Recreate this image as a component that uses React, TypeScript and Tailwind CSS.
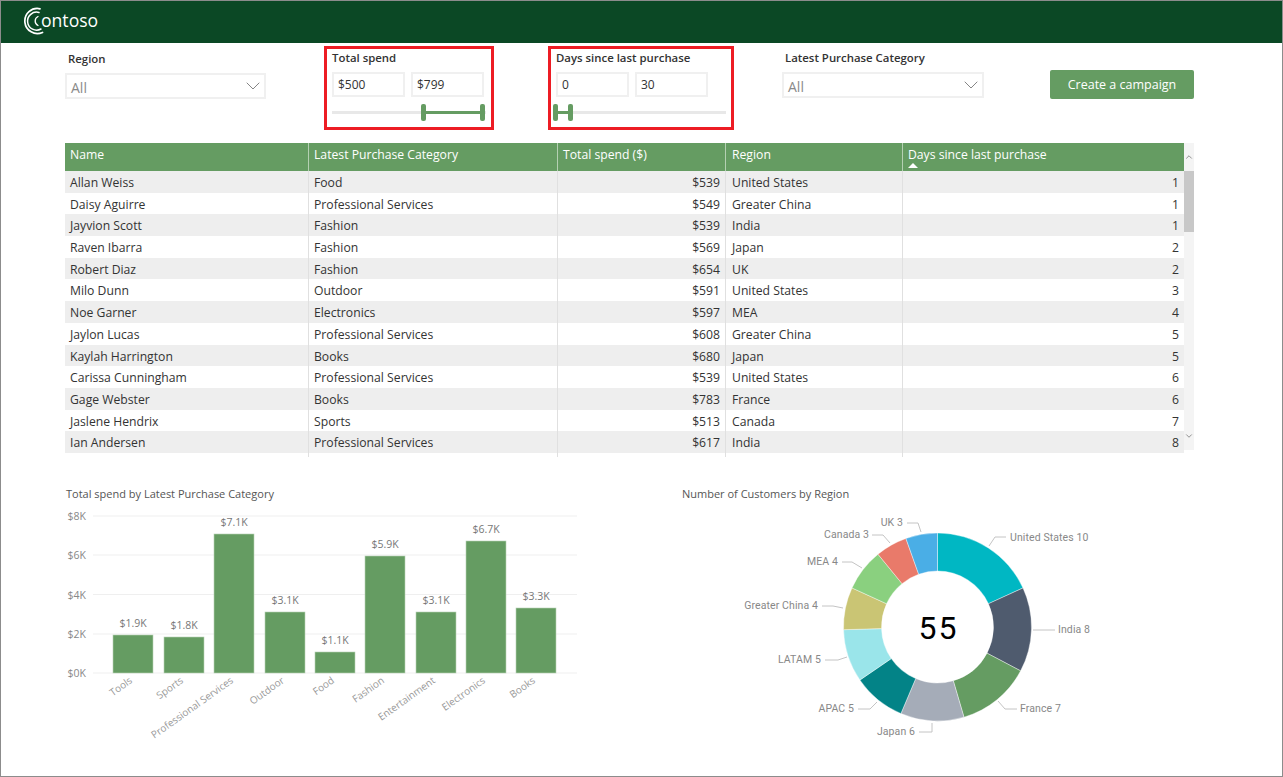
import React from 'react'
import { ChevronDown, ChevronUp } from 'lucide-react'

const rows = [
  ['Allan Weiss', 'Food', '$539', 'United States', '1'],
  ['Daisy Aguirre', 'Professional Services', '$549', 'Greater China', '1'],
  ['Jayvion Scott', 'Fashion', '$539', 'India', '1'],
  ['Raven Ibarra', 'Fashion', '$569', 'Japan', '2'],
  ['Robert Diaz', 'Fashion', '$654', 'UK', '2'],
  ['Milo Dunn', 'Outdoor', '$591', 'United States', '3'],
  ['Noe Garner', 'Electronics', '$597', 'MEA', '4'],
  ['Jaylon Lucas', 'Professional Services', '$608', 'Greater China', '5'],
  ['Kaylah Harrington', 'Books', '$680', 'Japan', '5'],
  ['Carissa Cunningham', 'Professional Services', '$539', 'United States', '6'],
  ['Gage Webster', 'Books', '$783', 'France', '6'],
  ['Jaslene Hendrix', 'Sports', '$513', 'Canada', '7'],
  ['Ian Andersen', 'Professional Services', '$617', 'India', '8'],
]

const bars = [
  { name: 'Tools', label: '$1.9K', x: 113, top: 635 },
  { name: 'Sports', label: '$1.8K', x: 164, top: 637 },
  { name: 'Professional Services', label: '$7.1K', x: 214, top: 534 },
  { name: 'Outdoor', label: '$3.1K', x: 265, top: 612 },
  { name: 'Food', label: '$1.1K', x: 315, top: 652 },
  { name: 'Fashion', label: '$5.9K', x: 365, top: 556 },
  { name: 'Entertainment', label: '$3.1K', x: 416, top: 612 },
  { name: 'Electronics', label: '$6.7K', x: 466, top: 541 },
  { name: 'Books', label: '$3.3K', x: 516, top: 608 },
]

const slices = [
  { label: 'United States 10', value: 10, color: '#00b7c3', line: '989,546 995,537 1006,537', tx: 1010, ty: 537, anchor: 'start' },
  { label: 'India 8', value: 8, color: '#4f5b6e', line: '1033,630 1055,630', tx: 1058, ty: 629, anchor: 'start' },
  { label: 'France 7', value: 7, color: '#659c62', line: '998,701 1005,709 1017,709', tx: 1020, ty: 708, anchor: 'start' },
  { label: 'Japan 6', value: 6, color: '#a5acb8', line: '932,723 932,732 919,732', tx: 915, ty: 731, anchor: 'end' },
  { label: 'APAC 5', value: 5, color: '#038387', line: '877,702 870,709 858,709', tx: 854, ty: 708, anchor: 'end' },
  { label: 'LATAM 5', value: 5, color: '#9ae5ea', line: '847,657 838,660 825,660', tx: 821, ty: 659, anchor: 'end' },
  { label: 'Greater China 4', value: 4, color: '#cac574', line: '843,608 833,606 822,606', tx: 818, ty: 605, anchor: 'end' },
  { label: 'MEA 4', value: 4, color: '#8ad07f', line: '862,568 852,562 842,562', tx: 838, ty: 561, anchor: 'end' },
  { label: 'Canada 3', value: 3, color: '#e97a6a', line: '890,543 883,535 872,535', tx: 869, ty: 534, anchor: 'end' },
  { label: 'UK 3', value: 3, color: '#4aaee6', line: '921,532 918,523 907,523', tx: 903, ty: 522, anchor: 'end' },
]

const CX = 937.5
const CY = 627
const R = 94
const IR = 56

function slicePath(from: number, to: number) {
  const a0 = (from / 55) * Math.PI * 2
  const a1 = (to / 55) * Math.PI * 2
  const p = (r: number, a: number) => `${CX + r * Math.sin(a)} ${CY - r * Math.cos(a)}`
  const large = to - from > 27.5 ? 1 : 0
  return `M${p(R, a0)} A${R} ${R} 0 ${large} 1 ${p(R, a1)} L${p(IR, a1)} A${IR} ${IR} 0 ${large} 0 ${p(IR, a0)} Z`
}

const Dropdown = () => (
  <div className="h-[26px] border-2 border-[#f0f0f0] flex items-center justify-between pl-1">
    <span className="text-[14px] text-[#8a8a8a] pt-[3px]">All</span>
    <ChevronDown className="size-[24px] -mr-[1px] text-[#777777]" strokeWidth={0.9} />
  </div>
)

const RangeInputs = ({ low, high }: { low: string; high: string }) => (
  <div className="flex gap-[6px] mt-[6px]">
    {[low, high].map((v) => (
      <div key={v} className="w-[73px] h-[25px] border-2 border-[#f0f0f0] pl-[4px] flex items-center text-[12px] text-[#333333]">{v}</div>
    ))}
  </div>
)

const Handle = ({ className }: { className: string }) => (
  <div className={`absolute top-0 w-[5px] h-[17px] rounded-[2px] bg-[#659c62] ${className}`} />
)

const App = () => {
  let sum = 0
  return (
    <div className="w-[1283px] h-[777px] border border-[#8c8c8c] bg-white overflow-hidden font-['Open_Sans',sans-serif] text-[#333333]">
      <header className="h-[42px] bg-[#0b4825] flex items-center pl-[21px]">
        <svg width="26" height="28" viewBox="0 0 26 28" fill="none" stroke="white" strokeLinecap="round" className="-mt-[2px]">
          <path d="M18 1.8 A12.5 12.5 0 1 0 20.5 25.4" strokeWidth="1.7" />
          <path d="M17 5.5 A9 9 0 1 0 19 22" strokeWidth="1.5" />
          <path d="M16 9.5 A5 5 0 0 0 16 18.5" strokeWidth="1.3" />
        </svg>
        <span className="text-white text-[17.6px] font-normal leading-none -ml-[7px] -mt-[2px]">ontoso</span>
      </header>

      <section className="h-[100px] flex items-start pl-[64px]">
        <div className="w-[201px] mt-[7px]">
          <div className="text-[11.4px] font-semibold pl-[3px] h-[23px]">Region</div>
          <Dropdown />
        </div>

        <div className="ml-[58px] mt-[3px] w-[170px] h-[84px] border-[3px] border-[#ed1c24] pl-[5px]">
          <div className="text-[11.4px] font-semibold">Total spend</div>
          <RangeInputs low="$500" high="$799" />
          <div className="relative w-[154px] h-[17px] mt-[7px]">
            <div className="absolute left-0 right-0 top-[7px] h-[3px] bg-[#e8e8e8]" />
            <div className="absolute left-[90px] w-[60px] top-[7px] h-[3px] bg-[#659c62]" />
            <Handle className="left-[89px]" />
            <Handle className="left-[148px]" />
          </div>
        </div>

        <div className="ml-[54px] mt-[3px] w-[186px] h-[84px] border-[3px] border-[#ed1c24] pl-[5px]">
          <div className="text-[11.4px] font-semibold">Days since last purchase</div>
          <RangeInputs low="0" high="30" />
          <div className="relative w-[173px] h-[17px] mt-[7px] -ml-[3px]">
            <div className="absolute left-0 right-0 top-[7px] h-[3px] bg-[#e8e8e8]" />
            <div className="absolute left-[2px] w-[16px] top-[7px] h-[3px] bg-[#659c62]" />
            <Handle className="left-0" />
            <Handle className="left-[15px]" />
          </div>
        </div>

        <div className="ml-[48px] mt-[6px] w-[202px]">
          <div className="text-[11.4px] font-semibold pl-[3px] h-[23px]">Latest Purchase Category</div>
          <Dropdown />
        </div>

        <button className="ml-[66px] mt-[27px] w-[144px] h-[29px] pt-[2px] rounded-[2px] bg-[#659c62] text-white text-[12.5px] font-normal">Create a campaign</button>
      </section>

      <section className="flex pl-[64px]">
        <div className="w-[1119px] text-[12.2px]">
          <div className="grid grid-cols-[244px_249px_168px_177px_281px] h-[28px] bg-[#659c62] text-white">
            {['Name', 'Latest Purchase Category', 'Total spend ($)', 'Region', 'Days since last purchase'].map((h, i) => (
              <div key={h} className={`relative pr-[5px] pt-[3px] ${i === 3 ? 'pl-[6px]' : 'pl-[5px]'} ${i < 4 ? 'border-r border-[#b5d0b3]' : ''}`}>
                {h}
                {i === 4 && <div className="absolute left-[5px] bottom-[3px] w-0 h-0 border-x-[5px] border-x-transparent border-b-[5px] border-b-white" />}
              </div>
            ))}
          </div>
          {rows.map((r, n) => (
            <div key={r[0]} className={`grid grid-cols-[244px_249px_168px_177px_281px] h-[21.7px] items-stretch leading-[24.4px] ${n % 2 === 0 ? 'bg-[#eeeeee]' : 'bg-white'}`}>
              {r.map((c, i) => (
                <div key={i} className={`pr-[5px] ${i === 3 ? 'pl-[6px]' : 'pl-[5px]'} ${i < 4 ? 'border-r border-[#e0e0e0]' : ''} ${i === 2 || i === 4 ? 'text-right' : ''}`}>{c}</div>
              ))}
            </div>
          ))}
          <div className="grid grid-cols-[244px_249px_168px_177px_281px] h-[4px]">
            {[0, 1, 2, 3, 4].map((i) => (
              <div key={i} className={i < 4 ? 'border-r border-[#e0e0e0]' : ''} />
            ))}
          </div>
        </div>
        <div className="w-[10px] h-[307px] bg-[#f4f4f4] flex flex-col">
          <div className="h-[28px] flex items-center justify-center">
            <ChevronUp className="size-[12px] text-[#555555]" strokeWidth={1.5} />
          </div>
          <div className="h-[61px] bg-[#c8c8c8]" />
          <div className="flex-1 flex items-end justify-center pb-[8px]">
            <ChevronDown className="size-[12px] text-[#555555]" strokeWidth={1.5} />
          </div>
        </div>
      </section>

      <section className="flex pl-[64px] mt-[29px]">
        <div className="w-[617px]">
          <div className="text-[11px] text-[#555555] leading-[15px] pb-[2px] pl-[1px]">Total spend by Latest Purchase Category</div>
          <svg width="520" height="258" viewBox="65 503 520 258" className="block font-['Open_Sans',sans-serif]">
            {[['$8K', 516], ['$6K', 555], ['$4K', 594.5], ['$2K', 634], ['$0K', 673]].map(([t, y]) => (
              <g key={t}>
                <line x1="93" x2="577" y1={y} y2={y} stroke="#efefef" strokeWidth="1" />
                <text x="86" y={Number(y) + 4} textAnchor="end" fontSize="10.5" fill="#888888">{t}</text>
              </g>
            ))}
            {bars.map((b) => (
              <g key={b.name}>
                <rect x={b.x} y={b.top} width="40" height={673 - b.top} fill="#659c62" stroke="#b7d2b5" strokeWidth="0.6" />
                <text x={b.x + 20} y={b.top - 8} textAnchor="middle" fontSize="10.5" fill="#777777">{b.label}</text>
                <text x={b.x + 20} y="682" textAnchor="end" fontSize="10" fill="#999999" transform={`rotate(-35.5 ${b.x + 20} 682)`}>{b.name}</text>
              </g>
            ))}
          </svg>
        </div>
        <div>
          <div className="text-[11px] text-[#555555] leading-[15px] pb-[2px]">Number of Customers by Region</div>
          <svg width="440" height="258" viewBox="682 503 440 258" className="block font-['Roboto',sans-serif]">
            {slices.map((s) => {
              const d = slicePath(sum, sum + s.value)
              sum += s.value
              return <path key={s.label} d={d} fill={s.color} stroke="white" strokeWidth="0.4" />
            })}
            {slices.map((s) => (
              <g key={s.label}>
                <polyline points={s.line} fill="none" stroke="#c4c4c4" strokeWidth="1" />
                <text x={s.tx} y={s.ty + 4} textAnchor={s.anchor as 'start' | 'end'} fontSize="10.5" letterSpacing="0.1" fill="#888888">{s.label}</text>
              </g>
            ))}
            <text x={CX + 1} y="639" textAnchor="middle" fontSize="32" letterSpacing="2" fill="#000000">55</text>
          </svg>
        </div>
      </section>
    </div>
  )
}

export default App
